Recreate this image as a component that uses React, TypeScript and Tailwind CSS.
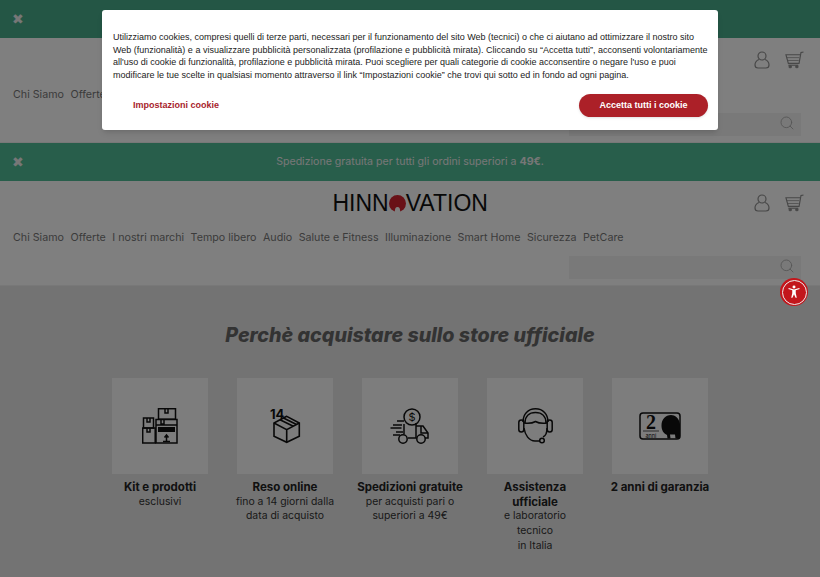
import { Search } from "lucide-react";

const NAV = [
  "Chi Siamo",
  "Offerte",
  "I nostri marchi",
  "Tempo libero",
  "Audio",
  "Salute e Fitness",
  "Illuminazione",
  "Smart Home",
  "Sicurezza",
  "PetCare",
];

function UserIcon() {
  return (
    <svg width="16" height="18" viewBox="0 0 16 18" fill="none" stroke="#909090" strokeWidth="1.2">
      <circle cx="8" cy="5" r="4" />
      <path d="M5 8.500C2.500 9.500 1 11.500 1 14c0 2 1.500 3 3 3h8c1.500 0 3-1 3-3 0-2.500-1.500-4.500-4-5.500" />
    </svg>
  );
}

function CartIcon() {
  return (
    <svg width="19" height="18" viewBox="0 0 20 18" fill="none" stroke="#909090" strokeWidth="1.2">
      <path d="M19.500 0.600 16.800 1.200 14.800 12.500H3.500L1 3.500H15.800" />
      <path d="M2 6.500H15M3 9.500H14.500" strokeWidth="0.8" />
      <path d="M3.500 14.500H14" />
      <circle cx="5.500" cy="16" r="1.200" fill="#909090" />
      <circle cx="12.500" cy="16" r="1.200" fill="#909090" />
    </svg>
  );
}

function Logo() {
  return (
    <div className="flex items-center justify-between w-[155px] h-[22px] font-['Liberation_Sans',sans-serif] text-[23px] leading-none text-[#111]">
      <span>HINN</span>
      <svg width="17" height="17" viewBox="0 0 19 19" className="shrink-0">
        <circle cx="9.500" cy="9.500" r="9.500" fill="#d3232e" />
        <path d="M6.500 19c0-4 1-5.500 3-5.500s3 1.500 3 5.500z" fill="#fff" />
      </svg>
      <span>VATION</span>
    </div>
  );
}

function Header({ dark }: { dark?: boolean }) {
  return (
    <header>
      <div
        className={`relative h-[38px] flex items-center justify-center font-['Inter',sans-serif] text-[10.600px] text-[#eee] ${
          dark ? "bg-[#49ad8b]" : "bg-[#50bc97]"
        }`}
      >
        <span className="absolute left-[12px] top-[10px] text-[14px] leading-[18px] font-bold text-[#eee] font-['DejaVu_Sans',sans-serif]">✖</span>
        <span>
          Spedizione gratuita per tutti gli ordini superiori a <b>49€</b>.
        </span>
      </div>
      <div className="h-[105px] bg-white relative">
        <div className="flex justify-center pt-[11px]">
          <Logo />
        </div>
        <div className="absolute right-[16px] top-[13px] flex items-center gap-[15px]">
          <UserIcon />
          <CartIcon />
        </div>
        <nav className="flex gap-[6.500px] pl-[13px] mt-[17px] font-['Inter',sans-serif] text-[10.700px] leading-[14px] text-[#777]">
          {NAV.map((item) => (
            <span key={item} className="whitespace-nowrap">{item}</span>
          ))}
        </nav>
        <div className="flex justify-end pr-[19px] mt-[11px] pb-[6px] border-b border-[#f0f0f0]">
          <div className="w-[232px] h-[23px] bg-[#f2f2f2] flex items-start justify-end pr-[6px] pt-[2px]">
            <Search className="w-[16px] h-[16px] text-[#aaa]" strokeWidth={1.3} />
          </div>
        </div>
      </div>
    </header>
  );
}

function BoxesIcon() {
  return (
    <svg width="36" height="36" viewBox="0 0 36 36" fill="none" stroke="#111" strokeWidth="1.500">
      <rect x="16.500" y="0.700" width="17" height="10.500" />
      <rect x="1.500" y="10" width="10" height="10" />
      <rect x="0.700" y="20" width="12.500" height="15" />
      <rect x="14" y="11.500" width="21" height="23.500" />
      <path d="M23 1v4h3V1M5 10v4h3v-4M5 20v4h3v-4M19 12v4h3v-4M14 17h21" />
      <rect x="16" y="19" width="17" height="5" fill="#111" stroke="none" />
      <path d="M24.500 33v-5M22.500 29.500l2-2.500 2 2.500M21 33.500h7" />
    </svg>
  );
}

function ReturnIcon() {
  return (
    <svg width="31" height="36" viewBox="0 0 31 36" fill="none" stroke="#111" strokeWidth="1.600" className="overflow-visible">
      <path d="M16.700 8.300 4 15v13.300l12.700 6L29.300 28.300V15z" />
      <path d="M4 15 16.700 21.700 29.300 15M16.700 21.700v12.600M10 11.700 23.300 18.300M13.500 10 26.500 16.500" />
      <text x="0" y="11" fontFamily="Inter, sans-serif" fontWeight="700" fontSize="13" fill="#111" stroke="none">14</text>
    </svg>
  );
}

function TruckIcon() {
  return (
    <svg width="40" height="36" viewBox="0 0 40 36" fill="none" stroke="#111" strokeWidth="1.500">
      <circle cx="22" cy="9" r="8" />
      <text x="22" y="13" textAnchor="middle" fontFamily="Inter, sans-serif" fontSize="11" fill="#111" stroke="none">$</text>
      <path d="M7 13h7M3 17h9M0.500 20h11M6 24h7M3 27h7" />
      <path d="M14 16v10M18 30h8V15M26 18h7l5 7v5h-3M31 18v7h7" />
      <circle cx="13" cy="31" r="4.200" />
      <circle cx="31" cy="31" r="4.200" />
    </svg>
  );
}

function HeadsetIcon() {
  return (
    <svg width="35" height="36" viewBox="0 0 35 36" fill="none" stroke="#111" strokeWidth="1.500">
      <path d="M5 14C5 6 10 0.800 17.500 0.800S30 6 30 14" />
      <path d="M7 15C7 8.500 11 4.500 17.500 4.500S28 8.500 28 15" />
      <rect x="0.800" y="12" width="5" height="12" rx="2.500" />
      <rect x="29.200" y="12" width="5" height="12" rx="2.500" />
      <path d="M6 15c4 .5 8 .5 11.500-1.500C21 15.500 25 15.500 29 15" />
      <path d="M6 20c1 7 5 13 11 13h5M29 20c0 5-1.500 8-4 9" />
      <circle cx="24" cy="32.500" r="2.300" />
    </svg>
  );
}

function WarrantyIcon() {
  return (
    <svg width="42" height="28" viewBox="0 0 42 28" fill="none">
      <rect x="1" y="1" width="40" height="26" rx="3" stroke="#111" strokeWidth="1.500" />
      <text x="12" y="17" textAnchor="middle" fontFamily="Liberation Serif, serif" fontWeight="700" fontSize="20" fill="#111">2</text>
      <path d="M4 19H20" stroke="#111" strokeWidth="0.700" />
      <text x="12" y="25.500" textAnchor="middle" fontFamily="Inter, sans-serif" fontSize="5.500" fill="#111">anni</text>
      <path d="M41 12C40 6 36 3 32 3c-5.500 0-9.500 4.500-9.500 10.500 0 4.500 2 8 5.500 9.500l.5 3.500h3l-.5-4h5l.5 4H41z" fill="#111" />
    </svg>
  );
}

const FEATURES = [
  { icon: <BoxesIcon />, title: ["Kit e prodotti"], text: ["esclusivi"] },
  { icon: <ReturnIcon />, title: ["Reso online"], text: ["fino a 14 giorni dalla", "data di acquisto"] },
  { icon: <TruckIcon />, title: ["Spedizioni gratuite"], text: ["per acquisti pari o", "superiori a 49€"] },
  { icon: <HeadsetIcon />, title: ["Assistenza", "ufficiale"], text: ["e laboratorio", "tecnico", "in Italia"] },
  { icon: <WarrantyIcon />, title: ["2 anni di garanzia"], text: [] },
];

export default function App() {
  return (
    <div className="relative h-[577px] w-[820px] overflow-hidden bg-[#e6e6e6] font-['Inter',sans-serif]">
      <Header dark />
      <Header />

      <main>
        <h2 className="mt-[34px] text-center text-[19.700px] leading-[30px] font-extrabold italic text-[#666]">
          Perchè acquistare sullo store ufficiale
        </h2>
        <div className="w-[625px] mx-auto mt-[28px] grid grid-cols-5">
          {FEATURES.map((f) => (
            <div key={f.title[0]} className="flex flex-col items-center text-center">
              <div className="w-[96px] h-[96px] bg-[#fafafa] flex items-center justify-center">{f.icon}</div>
              <div className="mt-[6px] text-[10.400px] leading-[14.700px] text-[#333]">
                {f.title.map((t) => (
                  <div key={t} className="text-[11.500px] font-bold whitespace-nowrap text-[#222]">{t}</div>
                ))}
                {f.text.map((t) => (
                  <div key={t} className="whitespace-nowrap">{t}</div>
                ))}
              </div>
            </div>
          ))}
        </div>
      </main>

      {/* overlay + cookie banner */}
      <div className="absolute inset-0 bg-black/50" />
      <div className="absolute left-[102px] top-[10px] w-[616px] h-[120px] bg-white rounded-[3px] shadow-md font-['Liberation_Sans',sans-serif] pl-[11px] pr-[6px] pt-[21px]">
        <p className="text-[9px] leading-[12.500px] text-[#222]">
          Utilizziamo cookies, compresi quelli di terze parti, necessari per il funzionamento del sito Web (tecnici) o che ci aiutano ad ottimizzare il nostro sito Web (funzionalità) e a visualizzare pubblicità personalizzata (profilazione e pubblicità mirata). Cliccando su “Accetta tutti”, acconsenti volontariamente all'uso di cookie di funzionalità, profilazione e pubblicità mirata. Puoi scegliere per quali categorie di cookie acconsentire o negare l'uso e puoi modificare le tue scelte in qualsiasi momento attraverso il link “Impostazioni cookie” che trovi qui sotto ed in fondo ad ogni pagina.
        </p>
        <div className="flex items-center justify-between mt-[13px] pl-[20px] pr-[4px]">
          <span className="text-[9px] font-bold text-[#a8232c]">Impostazioni cookie</span>
          <span className="w-[129px] h-[23px] rounded-full bg-[#ac2028] text-white text-[9px] font-bold flex items-center justify-center shadow-sm">
            Accetta tutti i cookie
          </span>
        </div>
      </div>

      {/* accessibility widget */}
      <div className="absolute left-[780px] top-[278px] w-[28px] h-[28px] rounded-full bg-[#c3161c] p-[1.500px]">
        <div className="w-full h-full rounded-full border border-[#eee] flex items-center justify-center">
          <svg width="14" height="14" viewBox="0 0 16 16" fill="white">
            <circle cx="8" cy="2.200" r="1.700" />
            <path d="M1.500 4.500 6 6v3.500L4.800 14.500h1.400L8 10.500l1.800 4h1.400L10 9.500V6l4.500-1.500L14 3.500 8 5 2 3.500z" />
          </svg>
        </div>
      </div>
    </div>
  );
}
